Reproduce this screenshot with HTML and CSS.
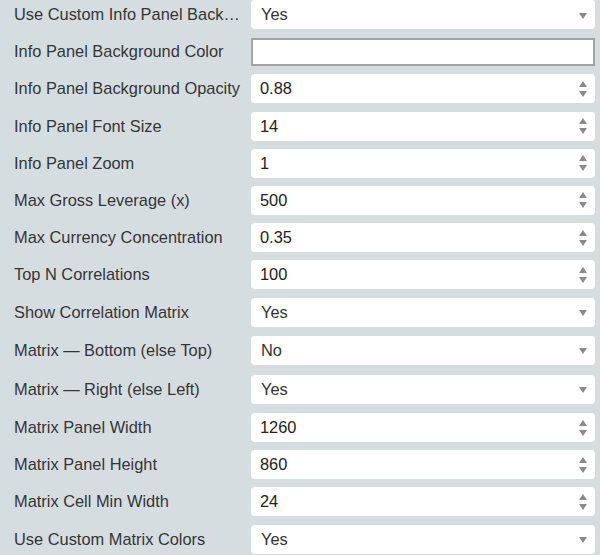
FILE: index.html
```html
<!DOCTYPE html>
<html>
<head>
<meta charset="utf-8">
<link rel="stylesheet" href="styles.css">
</head>
<body>
<div class="form">
  <div class="row"><div class="label">Use Custom Info Panel Background</div><div class="field select"><span class="val">Yes</span><span class="drop"></span></div></div>
  <div class="row"><div class="label">Info Panel Background Color</div><div class="field color"></div></div>
  <div class="row"><div class="label">Info Panel Background Opacity</div><div class="field num"><span class="val">0.88</span><span class="spin"><span class="up"></span><span class="down"></span></span></div></div>
  <div class="row"><div class="label">Info Panel Font Size</div><div class="field num"><span class="val">14</span><span class="spin"><span class="up"></span><span class="down"></span></span></div></div>
  <div class="row"><div class="label">Info Panel Zoom</div><div class="field num"><span class="val">1</span><span class="spin"><span class="up"></span><span class="down"></span></span></div></div>
  <div class="row"><div class="label">Max Gross Leverage (x)</div><div class="field num"><span class="val">500</span><span class="spin"><span class="up"></span><span class="down"></span></span></div></div>
  <div class="row"><div class="label">Max Currency Concentration</div><div class="field num"><span class="val">0.35</span><span class="spin"><span class="up"></span><span class="down"></span></span></div></div>
  <div class="row"><div class="label">Top N Correlations</div><div class="field num"><span class="val">100</span><span class="spin"><span class="up"></span><span class="down"></span></span></div></div>
  <div class="row"><div class="label">Show Correlation Matrix</div><div class="field select"><span class="val">Yes</span><span class="drop"></span></div></div>
  <div class="row dash"><div class="label">Matrix — Bottom (else Top)</div><div class="field select"><span class="val">No</span><span class="drop"></span></div></div>
  <div class="row dash"><div class="label">Matrix — Right (else Left)</div><div class="field select"><span class="val">Yes</span><span class="drop"></span></div></div>
  <div class="row"><div class="label">Matrix Panel Width</div><div class="field num"><span class="val">1260</span><span class="spin"><span class="up"></span><span class="down"></span></span></div></div>
  <div class="row"><div class="label">Matrix Panel Height</div><div class="field num"><span class="val">860</span><span class="spin"><span class="up"></span><span class="down"></span></span></div></div>
  <div class="row"><div class="label">Matrix Cell Min Width</div><div class="field num"><span class="val">24</span><span class="spin"><span class="up"></span><span class="down"></span></span></div></div>
  <div class="row"><div class="label">Use Custom Matrix Colors</div><div class="field select"><span class="val">Yes</span><span class="drop"></span></div></div>
</div>
</body>
</html>
```
FILE: styles.css
```css
html, body {
  margin: 0;
  padding: 0;
  background: #d6dde1;
}
body {
  font-family: "Liberation Sans", Arial, sans-serif;
  font-size: 16.4px;
  color: #333;
  overflow: hidden;
}
.form {
  display: flex;
  flex-direction: column;
  gap: 8.2px;
  padding: 0 5px 0 14px;
}
.row {
  display: flex;
  align-items: center;
  height: 29px;
  gap: 5px;
}
.row.dash {
  padding: 1px 0;
}
.label {
  width: 232px;
  flex: none;
  white-space: nowrap;
  overflow: hidden;
  text-overflow: ellipsis;
  color: #353535;
}
.field {
  flex: 1;
  height: 29px;
  box-sizing: border-box;
  background: #fff;
  border-radius: 4px;
  display: flex;
  align-items: center;
  padding: 0 8px 0 9px;
  color: #222;
}
.field.color {
  border: 2px solid #a3a3a3;
  border-radius: 0;
  height: 28px;
}
.val {
  flex: 1;
}
.select .val {
  padding-left: 1px;
  color: #333;
}
.drop {
  width: 0;
  height: 0;
  border-left: 4px solid transparent;
  border-right: 4px solid transparent;
  border-top: 6px solid #8a8a8a;
  margin-top: 2px;
}
.spin {
  display: flex;
  flex-direction: column;
  gap: 4px;
}
.up {
  width: 0;
  height: 0;
  border-left: 4px solid transparent;
  border-right: 4px solid transparent;
  border-bottom: 6px solid #8a8a8a;
}
.down {
  width: 0;
  height: 0;
  border-left: 4px solid transparent;
  border-right: 4px solid transparent;
  border-top: 6px solid #8a8a8a;
}
```
